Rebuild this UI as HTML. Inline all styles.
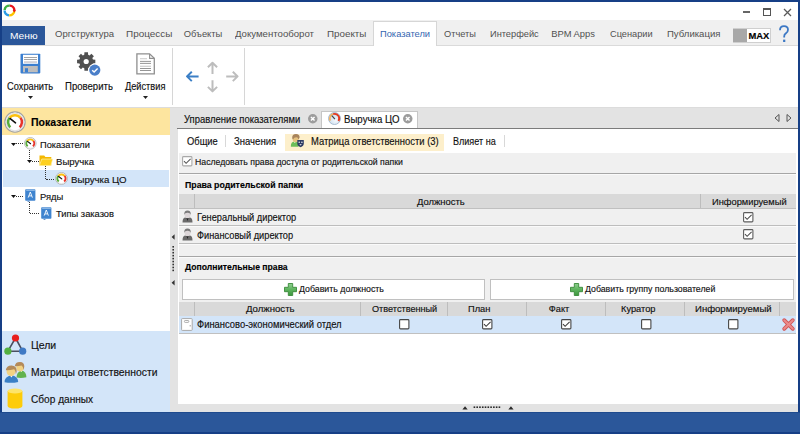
<!DOCTYPE html>
<html><head><meta charset="utf-8">
<style>
*{box-sizing:border-box;margin:0;padding:0}
html,body{width:800px;height:434px;overflow:hidden;background:#163f86}
body{position:relative;font-family:"Liberation Sans",sans-serif;font-size:9.3px;color:#222}
.a{position:absolute}
.t{position:absolute;white-space:nowrap;line-height:12px;-webkit-text-stroke:0.15px currentColor}
svg{position:absolute;overflow:visible}
.cb{position:absolute;width:10px;height:10px;border:1px solid #6e6e6e;background:#fff}
</style></head><body>

<div class="a" style="left:2px;top:2px;width:796px;height:18px;background:#fff;"></div>
<svg style="left:2.6px;top:4.3px" width="13" height="13" viewBox="0 0 13 13">
<g fill="none" stroke-width="2.4">
<path d="M1.6 6 A4.9 4.9 0 0 1 6.8 1.6" stroke="#3cb043"/>
<path d="M6.8 1.6 A4.9 4.9 0 0 1 11.4 6.2" stroke="#e8141b"/>
<path d="M11.4 6.8 A4.9 4.9 0 0 1 6.2 11.4" stroke="#fdc300"/>
<path d="M6 11.4 A4.9 4.9 0 0 1 1.6 6.6" stroke="#2a9be6"/>
</g>
<path d="M9.6 6 L13 6 L11.3 8.4Z" fill="#e8141b"/>
</svg>
<div class="a" style="left:743px;top:11px;width:7px;height:1.6px;background:#666;"></div>
<div class="a" style="left:763px;top:8px;width:8px;height:8px;border:1px solid #555;border-top-width:2px"></div>
<svg style="left:784px;top:8.5px" width="7" height="7" viewBox="0 0 7 7"><path d="M0 0L7 7M7 0L0 7" stroke="#5a5a5a" stroke-width="1.25"/></svg>
<div class="a" style="left:2px;top:20px;width:796px;height:26px;background:#f0f0f0;border-bottom:1px solid #dadada"></div>
<div class="a" style="left:2px;top:26px;width:43px;height:19px;background:#2b579a;"></div>
<div class="t" style="left:9.58px;top:30.34px;color:#fff;font-size:9.7px;transform:scaleX(1.0520);transform-origin:0 0;-webkit-text-stroke:0;">Меню</div>
<div class="t" style="left:54.5px;top:27.74px;color:#505050;font-size:9.4px;transform:scaleX(1.0172);transform-origin:0 0;-webkit-text-stroke:0;">Оргструктура</div>
<div class="t" style="left:125.58px;top:27.74px;color:#505050;font-size:9.4px;transform:scaleX(1.0595);transform-origin:0 0;-webkit-text-stroke:0;">Процессы</div>
<div class="t" style="left:183.7px;top:27.74px;color:#505050;font-size:9.4px;transform:scaleX(1.0000);transform-origin:0 0;-webkit-text-stroke:0;">Объекты</div>
<div class="t" style="left:234.5px;top:27.74px;color:#505050;font-size:9.4px;transform:scaleX(1.0260);transform-origin:0 0;-webkit-text-stroke:0;">Документооборот</div>
<div class="t" style="left:327.18px;top:27.74px;color:#505050;font-size:9.4px;transform:scaleX(1.0472);transform-origin:0 0;-webkit-text-stroke:0;">Проекты</div>
<div class="t" style="left:443.7px;top:27.74px;color:#505050;font-size:9.4px;transform:scaleX(0.9875);transform-origin:0 0;-webkit-text-stroke:0;">Отчеты</div>
<div class="t" style="left:489.61px;top:27.74px;color:#505050;font-size:9.4px;transform:scaleX(0.9854);transform-origin:0 0;-webkit-text-stroke:0;">Интерфейс</div>
<div class="t" style="left:551.2px;top:27.74px;color:#505050;font-size:9.4px;transform:scaleX(1.0000);transform-origin:0 0;-webkit-text-stroke:0;">BPM Apps</div>
<div class="t" style="left:609.5px;top:27.74px;color:#505050;font-size:9.4px;transform:scaleX(0.9837);transform-origin:0 0;-webkit-text-stroke:0;">Сценарии</div>
<div class="t" style="left:667.09px;top:27.74px;color:#505050;font-size:9.4px;transform:scaleX(1.0196);transform-origin:0 0;-webkit-text-stroke:0;">Публикация</div>
<div class="a" style="left:373px;top:21px;width:64px;height:25px;background:#fff;border:1px solid #d6d6d6;border-bottom:none"></div>
<div class="t" style="left:379.6px;top:27.74px;color:#3566b0;font-size:9.4px;transform:scaleX(0.9918);transform-origin:0 0;-webkit-text-stroke:0;">Показатели</div>
<div class="a" style="left:732.5px;top:28.2px;width:38px;height:14.5px;background:#fff;border:1px solid #cfcfcf"></div>
<div class="a" style="left:733px;top:28.7px;width:14px;height:13.5px;background:#a8a8a8;"></div>
<div class="t" style="left:748.5px;top:29.5px;color:#000;font-size:9.4px;font-weight:bold;">MAX</div>
<svg style="left:778px;top:25px" width="12" height="18" viewBox="0 0 12 18"><path d="M2 5.2 Q2 1.2 6 1.2 Q10 1.2 10 4.8 Q10 7.2 7.6 8.6 Q6.2 9.5 6.2 11.6 V12.6" stroke="#3c78c4" stroke-width="1.8" fill="none"/><rect x="5.1" y="14.6" width="2.2" height="2.4" fill="#3c78c4"/></svg>
<div class="a" style="left:2px;top:46px;width:796px;height:61px;background:#fff;"></div>
<div class="a" style="left:2px;top:107px;width:796px;height:1px;background:#dcdcdc;"></div>
<div class="a" style="left:172px;top:48px;width:1px;height:57px;background:#d6d6d6;"></div>
<div class="a" style="left:244px;top:48px;width:1px;height:57px;background:#d6d6d6;"></div>
<svg style="left:20px;top:53px" width="21" height="21" viewBox="0 0 21 21">
<rect x="0.5" y="0.8" width="19.8" height="19.6" rx="0.8" fill="#3b7fd0"/>
<rect x="3" y="1.8" width="15" height="9" fill="#fff"/>
<rect x="4" y="4" width="13" height="0.9" fill="#9a9a9a"/>
<rect x="4" y="6.1" width="13" height="0.9" fill="#9a9a9a"/>
<rect x="4" y="8.3" width="13" height="1.5" fill="#c8c8d0"/>
<rect x="3" y="13" width="14.8" height="6.3" fill="#bdbdbd"/>
<rect x="5" y="15.2" width="3" height="4.1" fill="#3b7fd0"/>
</svg>
<svg style="left:76px;top:51px" width="26" height="26" viewBox="0 0 26 26">
<polygon points="8.27,3.77 8.43,1.37 11.97,1.37 12.13,3.77 13.59,4.38 15.40,2.79 17.91,5.30 16.32,7.11 16.93,8.57 19.33,8.73 19.33,12.27 16.93,12.43 16.32,13.89 17.91,15.70 15.40,18.21 13.59,16.62 12.13,17.23 11.97,19.63 8.43,19.63 8.27,17.23 6.81,16.62 5.00,18.21 2.49,15.70 4.08,13.89 3.47,12.43 1.07,12.27 1.07,8.73 3.47,8.57 4.08,7.11 2.49,5.30 5.00,2.79 6.81,4.38" fill="#505050"/>
<circle cx="10.200000000000003" cy="10.5" r="2.6" fill="#fff"/>
<circle cx="18.8" cy="19.1" r="6.6" fill="#fff"/>
<circle cx="18.8" cy="19.1" r="5.6" fill="#4a7fc9"/>
<path d="M16.2 19.2 L18.1 21 L21.6 17.4" stroke="#fff" stroke-width="1.4" fill="none"/>
</svg>
<svg style="left:136px;top:53px" width="20" height="22" viewBox="0 0 20 22">
<path d="M0.9 0.9 H13.6 L18.3 5.4 V20.9 H0.9 Z" fill="#fff" stroke="#8f8f8f" stroke-width="1.3"/>
<path d="M13.6 0.9 V5.4 H18.3" fill="none" stroke="#8f8f8f" stroke-width="1.1"/>
<rect x="4" y="5.3" width="7" height="0.9" fill="#c4c4c4"/>
<rect x="4" y="7.9" width="11" height="0.9" fill="#8a8a8a"/>
<rect x="4" y="9.9" width="11" height="0.9" fill="#8a8a8a"/>
<rect x="4" y="12.7" width="11" height="1.1" fill="#c8c8c8"/>
<rect x="4" y="15" width="11" height="0.9" fill="#8a8a8a"/>
<rect x="4" y="17.1" width="11" height="0.9" fill="#8a8a8a"/>
</svg>
<div class="t" style="left:7.2px;top:80.97px;color:#111;font-size:10.2px;transform:scaleX(0.9100);transform-origin:0 0;">Сохранить</div>
<div class="t" style="left:64.82px;top:80.97px;color:#111;font-size:10.2px;transform:scaleX(0.9400);transform-origin:0 0;">Проверить</div>
<div class="t" style="left:125.2px;top:80.97px;color:#111;font-size:10.2px;transform:scaleX(0.9045);transform-origin:0 0;">Действия</div>
<svg style="left:27.6px;top:96.4px" width="5" height="3" viewBox="0 0 5 3"><path d="M0 0H5L2.5 3Z" fill="#222"/></svg>
<svg style="left:142.9px;top:96.2px" width="5" height="3" viewBox="0 0 5 3"><path d="M0 0H5L2.5 3Z" fill="#222"/></svg>
<svg style="left:182px;top:58px" width="60" height="38" viewBox="0 0 60 38">
<g stroke-width="2" fill="none" stroke-linejoin="round">
<path d="M4.8 18.4 H16.6 M9.8 13.7 L5 18.4 L9.8 23.1" stroke="#3b7fc6"/>
<path d="M30.5 5 V16 M25.9 9.3 L30.5 4.8 L35.1 9.3" stroke="#bdbdbd"/>
<path d="M30.5 22.3 V33.3 M25.9 28.9 L30.5 33.4 L35.1 28.9" stroke="#bdbdbd"/>
<path d="M44.2 18.4 H55.6 M50.8 13.7 L55.6 18.4 L50.8 23.1" stroke="#bdbdbd"/>
</g></svg>
<div class="a" style="left:2px;top:108px;width:167.5px;height:27px;background:#fde59f;"></div>
<div class="a" style="left:2px;top:135px;width:167.5px;height:196px;background:#fff;"></div>
<div class="a" style="left:2px;top:331px;width:167.5px;height:81px;background:#d3e5f9;"></div>
<svg style="left:4px;top:110.8px" width="22" height="22" viewBox="0 0 22 22">
<circle cx="11" cy="11" r="10.1" fill="#fff" stroke="#a3a3a3" stroke-width="1.3"/>
<circle cx="11" cy="11" r="8.8" fill="none" stroke="#e2e2e2" stroke-width="1.3"/>
<path d="M6.4 16.2 A6.8 6.8 0 0 1 5.6 6.8" stroke="#58ad3a" stroke-width="2.5" fill="none"/>
<path d="M5.6 6.8 A6.8 6.8 0 0 1 16.4 6.8" stroke="#fcc010" stroke-width="2.5" fill="none"/>
<path d="M16.4 6.8 A6.8 6.8 0 0 1 15.6 16.2" stroke="#e8332a" stroke-width="2.5" fill="none"/>
<path d="M11.5 11.8 L6.2 7.6" stroke="#111" stroke-width="1.6" stroke-linecap="round"/>
</svg>
<div class="t" style="left:31.0px;top:115.5px;color:#000;font-size:10.6px;font-weight:bold;transform:scaleX(0.9898);transform-origin:0 0;">Показатели</div>
<div class="a" style="left:3.3px;top:170px;width:166.2px;height:17px;background:#d3e5f9;"></div>
<svg style="left:10.8px;top:143px" width="5" height="3" viewBox="0 0 5 3"><path d="M0 0H5L2.5 3Z" fill="#111"/></svg>
<div class="a" style="left:16px;top:143px;width:7px;height:1px;border-top:1px dotted #333"></div>
<svg style="left:23.8px;top:137.2px" width="12.6" height="12.6" viewBox="0 0 22 22">
<circle cx="11" cy="11" r="10.1" fill="#fff" stroke="#a3a3a3" stroke-width="1.3"/>
<circle cx="11" cy="11" r="8.8" fill="none" stroke="#e2e2e2" stroke-width="1.3"/>
<path d="M6.4 16.2 A6.8 6.8 0 0 1 5.6 6.8" stroke="#58ad3a" stroke-width="3.4" fill="none"/>
<path d="M5.6 6.8 A6.8 6.8 0 0 1 16.4 6.8" stroke="#fcc010" stroke-width="3.4" fill="none"/>
<path d="M16.4 6.8 A6.8 6.8 0 0 1 15.6 16.2" stroke="#e8332a" stroke-width="3.4" fill="none"/>
<path d="M11.5 11.8 L6.2 7.6" stroke="#111" stroke-width="2.0" stroke-linecap="round"/>
</svg>
<div class="t" style="left:39.72px;top:139.14px;color:#111;font-size:9.7px;transform:scaleX(0.9549);transform-origin:0 0;">Показатели</div>
<div class="a" style="left:29px;top:150px;width:1px;height:11px;border-left:1px dotted #333"></div>
<svg style="left:27px;top:160px" width="5" height="3" viewBox="0 0 5 3"><path d="M0 0H5L2.5 3Z" fill="#111"/></svg>
<div class="a" style="left:32px;top:161px;width:6.5px;height:1px;border-top:1px dotted #333"></div>
<svg style="left:39px;top:155px" width="14" height="11" viewBox="0 0 14 11">
<path d="M0.5 0.6 H5.2 L6.4 2 H12.3 V10.5 H0.5 Z" fill="#f4b800"/>
<path d="M2.8 4 H13.8 L11.8 10.6 H0.4 Z" fill="#fdd020" stroke="#fff6c8" stroke-width="0.6"/>
</svg>
<div class="t" style="left:55.8px;top:156.14px;color:#111;font-size:9.7px;transform:scaleX(0.9892);transform-origin:0 0;">Выручка</div>
<div class="a" style="left:45px;top:166px;width:1px;height:13px;border-left:1px dotted #333"></div>
<div class="a" style="left:46px;top:178.5px;width:7.5px;height:1px;border-top:1px dotted #333"></div>
<svg style="left:55px;top:172.4px" width="12.9" height="12.9" viewBox="0 0 22 22">
<circle cx="11" cy="11" r="10.1" fill="#fff" stroke="#a3a3a3" stroke-width="1.3"/>
<circle cx="11" cy="11" r="8.8" fill="none" stroke="#e2e2e2" stroke-width="1.3"/>
<path d="M6.4 16.2 A6.8 6.8 0 0 1 5.6 6.8" stroke="#58ad3a" stroke-width="3.4" fill="none"/>
<path d="M5.6 6.8 A6.8 6.8 0 0 1 16.4 6.8" stroke="#fcc010" stroke-width="3.4" fill="none"/>
<path d="M16.4 6.8 A6.8 6.8 0 0 1 15.6 16.2" stroke="#e8332a" stroke-width="3.4" fill="none"/>
<path d="M11.5 11.8 L6.2 7.6" stroke="#111" stroke-width="2.0" stroke-linecap="round"/>
</svg>
<div class="t" style="left:71.1px;top:174.14px;color:#111;font-size:9.7px;transform:scaleX(0.9981);transform-origin:0 0;">Выручка ЦО</div>
<svg style="left:11px;top:194.8px" width="5" height="3" viewBox="0 0 5 3"><path d="M0 0H5L2.5 3Z" fill="#111"/></svg>
<div class="a" style="left:16px;top:196px;width:7px;height:1px;border-top:1px dotted #333"></div>
<svg style="left:24.9px;top:189.2px" width="11" height="13" viewBox="0 0 11 13">
<rect x="0.2" y="0.2" width="10.2" height="11.5" rx="0.8" fill="#3f84cf"/>
<rect x="1.2" y="0.8" width="8.6" height="0.9" fill="#a9cbee"/>
<path d="M2.7 12 H4.3 V13 L3.5 12.4 L2.7 13Z" fill="#1e5ca8"/>
<path d="M3.2 8.6 L5.3 3 L7.4 8.6 M4 6.9 H6.6" stroke="#fff" stroke-width="0.9" fill="none"/>
</svg>
<div class="t" style="left:39.61px;top:191.14px;color:#111;font-size:9.7px;transform:scaleX(0.9652);transform-origin:0 0;">Ряды</div>
<div class="a" style="left:29px;top:202px;width:1px;height:11px;border-left:1px dotted #333"></div>
<div class="a" style="left:30px;top:213px;width:9px;height:1px;border-top:1px dotted #333"></div>
<svg style="left:40.8px;top:206.5px" width="11" height="13" viewBox="0 0 11 13">
<rect x="0.2" y="0.2" width="10.2" height="11.5" rx="0.8" fill="#3f84cf"/>
<rect x="1.2" y="0.8" width="8.6" height="0.9" fill="#a9cbee"/>
<path d="M2.7 12 H4.3 V13 L3.5 12.4 L2.7 13Z" fill="#1e5ca8"/>
<path d="M3.2 8.6 L5.3 3 L7.4 8.6 M4 6.9 H6.6" stroke="#fff" stroke-width="0.9" fill="none"/>
</svg>
<div class="t" style="left:55.6px;top:208.14px;color:#111;font-size:9.7px;transform:scaleX(0.9633);transform-origin:0 0;">Типы заказов</div>
<svg style="left:3px;top:333px" width="25" height="23" viewBox="0 0 25 23">
<path d="M12.5 5 L4.9 18.2 H19.7 Z" stroke="#4a4f60" stroke-width="1.6" fill="none"/>
<circle cx="12.5" cy="5" r="3.6" fill="#e8201f"/>
<circle cx="4.9" cy="18.2" r="3.6" fill="#54b041"/>
<circle cx="19.7" cy="18.2" r="3.6" fill="#3f79c4"/>
</svg>
<div class="t" style="left:31.0px;top:340.2px;color:#111;font-size:10.4px;transform:scaleX(1.0083);transform-origin:0 0;">Цели</div>
<svg style="left:2px;top:358px" width="28" height="28" viewBox="0 0 28 28">
<path d="M14.6 19.6 Q14.4 13.8 19.6 12.4 Q24.4 13.6 24.4 19.2 Q19.5 20.6 14.6 19.6Z" fill="#62b24e"/>
<path d="M18.2 12.6 L19.4 14 L20.6 12.6Z" fill="#fff"/>
<ellipse cx="18" cy="9.4" rx="3.7" ry="4.1" fill="#f2d283"/>
<path d="M12.8 8.2 Q13.2 3.8 18 3.9 Q22.4 4 22.3 8.6 L21.6 12 Q21 8.2 19.6 7.6 Q16 8.4 12.8 8.2Z" fill="#b48a5a"/>
<path d="M2.6 24.2 Q2.4 18.6 9.3 17.2 Q16.2 18.4 16.2 24 Q9.3 25.6 2.6 24.2Z" fill="#3a7fc6"/>
<path d="M8 17.6 L9.4 19.4 L10.8 17.6Z" fill="#fff"/>
<ellipse cx="9" cy="13.6" rx="4.4" ry="4.6" fill="#f2d283"/>
<path d="M3.8 12.2 Q4.4 7.4 9.6 7.5 Q14.8 7.8 14.7 13.4 L13.9 16.2 Q13.3 12 12 11.3 Q8 12.4 3.8 12.2Z" fill="#b48a5a"/>
</svg>
<div class="t" style="left:31.0px;top:366.8px;color:#111;font-size:10.4px;transform:scaleX(0.9968);transform-origin:0 0;">Матрицы ответственности</div>
<svg style="left:7px;top:388px" width="16" height="21" viewBox="0 0 16 21">
<path d="M0.6 3 V17.8 Q0.6 20.6 8 20.6 Q15.4 20.6 15.4 17.8 V3Z" fill="#fdcc0a"/>
<ellipse cx="8" cy="3" rx="7.4" ry="2.5" fill="#fde46a"/>
</svg>
<div class="t" style="left:31.4px;top:394.2px;color:#111;font-size:10.4px;transform:scaleX(0.9734);transform-origin:0 0;">Сбор данных</div>
<div class="a" style="left:169.5px;top:108px;width:628.5px;height:304px;background:#e3e3e3;"></div>
<svg style="left:171px;top:234px" width="4" height="52" viewBox="0 0 4 52"><g fill="#333"><path d="M3.6 0.2 V5.8 L0.6 3Z M3.6 46 V51.6 L0.6 48.8Z"/><rect x="1.4" y="12.00" width="1.6" height="1.6"/><rect x="1.4" y="14.95" width="1.6" height="1.6"/><rect x="1.4" y="17.90" width="1.6" height="1.6"/><rect x="1.4" y="20.85" width="1.6" height="1.6"/><rect x="1.4" y="23.80" width="1.6" height="1.6"/><rect x="1.4" y="26.75" width="1.6" height="1.6"/><rect x="1.4" y="29.70" width="1.6" height="1.6"/><rect x="1.4" y="32.65" width="1.6" height="1.6"/><rect x="1.4" y="35.60" width="1.6" height="1.6"/></g></svg>
<div class="t" style="left:183.6px;top:113.6px;color:#111;font-size:10.1px;transform:scaleX(0.9382);transform-origin:0 0;">Управление показателями</div>
<svg style="left:307.5px;top:113.8px" width="9.5" height="9.5" viewBox="0 0 9 9"><circle cx="4.5" cy="4.5" r="4.5" fill="#9c9c9c"/><path d="M2.8 2.8L6.2 6.2M6.2 2.8L2.8 6.2" stroke="#fff" stroke-width="1.4"/></svg>
<div class="a" style="left:321px;top:110.6px;width:96.5px;height:18.9px;background:#fff;border:1px solid #c6c6c6;border-bottom:none"></div>
<svg style="left:327.8px;top:111.8px" width="13" height="13" viewBox="0 0 13 13">
<defs><radialGradient id="gg" cx="0.6" cy="0.65" r="0.6"><stop offset="0" stop-color="#f4f8fc"/><stop offset="1" stop-color="#c9dcee"/></radialGradient></defs>
<circle cx="6.5" cy="6.5" r="6" fill="url(#gg)" stroke="#9fb4cc" stroke-width="0.9"/>
<path d="M2.3 8.6 A4.6 4.6 0 0 1 5.2 2.1" stroke="#f6b35a" stroke-width="1.6" fill="none"/>
<path d="M5.2 2.1 A4.6 4.6 0 0 1 10.4 9.1" stroke="#e5381f" stroke-width="1.8" fill="none"/>
<path d="M6.9 7.1 L3.8 3.6" stroke="#444" stroke-width="1.2"/>
</svg>
<div class="t" style="left:343.62px;top:113.6px;color:#111;font-size:10.1px;transform:scaleX(0.9561);transform-origin:0 0;">Выручка ЦО</div>
<svg style="left:403px;top:113.8px" width="9.5" height="9.5" viewBox="0 0 9 9"><circle cx="4.5" cy="4.5" r="4.5" fill="#9c9c9c"/><path d="M2.8 2.8L6.2 6.2M6.2 2.8L2.8 6.2" stroke="#fff" stroke-width="1.4"/></svg>
<svg style="left:774px;top:114px" width="18" height="8" viewBox="0 0 18 8"><path d="M5 0.5 V7.5 L1 4Z" fill="none" stroke="#555" stroke-width="1"/><path d="M13 0.5 V7.5 L17 4Z" fill="none" stroke="#555" stroke-width="1"/></svg>
<div class="a" style="left:177px;top:128px;width:620.5px;height:1px;background:#7c7c7c;"></div>
<div class="a" style="left:178px;top:129px;width:619.5px;height:274.7px;background:#fff;"></div>
<div class="a" style="left:285.3px;top:133.6px;width:159px;height:17.3px;background:#fdefcb;"></div>
<div class="t" style="left:186.6px;top:135.5px;color:#111;font-size:10.4px;transform:scaleX(0.9000);transform-origin:0 0;">Общие</div>
<div class="a" style="left:225px;top:135px;width:1px;height:12px;background:#d8d8d8;"></div>
<div class="t" style="left:234.1px;top:135.5px;color:#111;font-size:10.4px;transform:scaleX(0.9178);transform-origin:0 0;">Значения</div>
<div class="t" style="left:311.14px;top:135.5px;color:#111;font-size:10.4px;transform:scaleX(0.9065);transform-origin:0 0;">Матрица ответственности (3)</div>
<div class="t" style="left:453.15px;top:135.5px;color:#111;font-size:10.4px;transform:scaleX(0.8708);transform-origin:0 0;">Влияет на</div>
<div class="a" style="left:504px;top:135px;width:1px;height:12px;background:#d8d8d8;"></div>
<svg style="left:289px;top:133px" width="16" height="16" viewBox="0 0 16 16">
<path d="M1.8 13.8 Q1.8 9 5 8.6 H7.5 Q9.5 9 9.5 11 V13.8Z" fill="#6cbd58"/>
<path d="M4.6 8.6 L5.8 10 L7 8.6Z" fill="#fff"/>
<ellipse cx="6.6" cy="6" rx="3" ry="3.2" fill="#e6c27e"/>
<path d="M3.2 5.2 Q3 1 7 1 Q10.8 1.2 10.6 4.6 Q10 6 9.4 6.6 Q9.2 4 7.2 4.2 Q5 4.2 4 6.6Z" fill="#a9845c"/>
<path d="M8.3 7 H14.8 V10.6 Q14.8 13.4 11.55 14.2 Q8.3 13.4 8.3 10.6Z" fill="#2d3b63"/>
<circle cx="10.2" cy="9.2" r="0.7" fill="#fff"/><circle cx="12.9" cy="9.2" r="0.7" fill="#fff"/>
<path d="M10.3 11.3 H12.8 L11.55 12.5Z" fill="#fff"/>
</svg>
<div class="a" style="left:179px;top:152.5px;width:616.7px;height:251px;background:#f0f0f0;"></div>
<svg style="left:182px;top:156.3px" width="10.5" height="10.5" viewBox="0 0 10.5 10.5">
<rect x="0.6" y="0.6" width="9.3" height="9.3" rx="0.9" fill="#fff" stroke="#a8a8a8" stroke-width="1.1"/>
<path d="M2 5.2 L4.1 7.3 L8.6 2.9" stroke="#555" stroke-width="1.05" fill="none"/>
</svg>
<div class="t" style="left:194.64px;top:156.2px;color:#111;font-size:9.8px;transform:scaleX(0.8884);transform-origin:0 0;">Наследовать права доступа от родительской папки</div>
<div class="a" style="left:179px;top:173px;width:616.7px;height:1px;background:#a6a6a6;"></div>
<div class="a" style="left:179px;top:174px;width:616.7px;height:1px;background:#fafafa;"></div>
<div class="t" style="left:184.5px;top:178.6px;color:#000;font-size:9.8px;font-weight:bold;transform:scaleX(0.8939);transform-origin:0 0;">Права родительской папки</div>
<div class="a" style="left:179px;top:194px;width:616.7px;height:14px;background:#d9d9d9;"></div>
<div class="a" style="left:193.5px;top:194px;width:1px;height:14px;background:#bdbdbd;"></div>
<div class="a" style="left:700px;top:194px;width:1px;height:14px;background:#bdbdbd;"></div>
<div class="t" style="left:416.8px;top:195.91px;color:#111;font-size:9.2px;transform:scaleX(1.0261);transform-origin:0 0;">Должность</div>
<div class="t" style="left:711.79px;top:195.91px;color:#111;font-size:9.2px;transform:scaleX(1.0139);transform-origin:0 0;">Информируемый</div>
<div class="a" style="left:179px;top:207.6px;width:616.7px;height:1px;background:#c0c0c0;"></div>
<div class="a" style="left:179px;top:224.8px;width:616.7px;height:1px;background:#bdbdbd;"></div>
<div class="a" style="left:179px;top:225.8px;width:616.7px;height:1px;background:#fafafa;"></div>
<div class="a" style="left:179px;top:242.6px;width:616.7px;height:1px;background:#bdbdbd;"></div>
<div class="a" style="left:179px;top:243.6px;width:616.7px;height:1px;background:#fafafa;"></div>
<div class="a" style="left:179px;top:255.9px;width:616.7px;height:1px;background:#a6a6a6;"></div>
<div class="a" style="left:179px;top:256.9px;width:616.7px;height:1px;background:#fafafa;"></div>
<svg style="left:182px;top:210px" width="11" height="13" viewBox="0 0 11 13">
<path d="M0.5 12.5 Q0.5 8.3 3 7.6 H8 Q10.5 8.3 10.5 12.5Z" fill="#6a6a6a"/>
<path d="M4.3 7.6 L5.5 11 L6.7 7.6Z" fill="#222"/>
<ellipse cx="5.5" cy="4.6" rx="3" ry="3.6" fill="#dcd6d8"/>
<path d="M2.3 4.8 Q2 0.6 5.5 0.6 Q9 0.6 8.7 4.8 Q8 2.6 5.5 2.8 Q3 2.6 2.3 4.8Z" fill="#7a7a7a"/>
</svg>
<div class="t" style="left:197.33px;top:211.7px;color:#111;font-size:10.1px;transform:scaleX(0.9168);transform-origin:0 0;">Генеральный директор</div>
<svg style="left:743.2px;top:211.6px" width="10.5" height="10.5" viewBox="0 0 10.5 10.5">
<rect x="0.6" y="0.6" width="9.3" height="9.3" rx="0.9" fill="#fff" stroke="#5c5c5c" stroke-width="1.1"/>
<path d="M2 5.2 L4.1 7.3 L8.6 2.9" stroke="#4a4a4a" stroke-width="1.05" fill="none"/>
</svg>
<svg style="left:182px;top:227.5px" width="11" height="13" viewBox="0 0 11 13">
<path d="M0.5 12.5 Q0.5 8.3 3 7.6 H8 Q10.5 8.3 10.5 12.5Z" fill="#6a6a6a"/>
<path d="M4.3 7.6 L5.5 11 L6.7 7.6Z" fill="#222"/>
<ellipse cx="5.5" cy="4.6" rx="3" ry="3.6" fill="#dcd6d8"/>
<path d="M2.3 4.8 Q2 0.6 5.5 0.6 Q9 0.6 8.7 4.8 Q8 2.6 5.5 2.8 Q3 2.6 2.3 4.8Z" fill="#7a7a7a"/>
</svg>
<div class="t" style="left:196.53px;top:229.6px;color:#111;font-size:10.1px;transform:scaleX(0.9163);transform-origin:0 0;">Финансовый директор</div>
<svg style="left:743.2px;top:229.2px" width="10.5" height="10.5" viewBox="0 0 10.5 10.5">
<rect x="0.6" y="0.6" width="9.3" height="9.3" rx="0.9" fill="#fff" stroke="#5c5c5c" stroke-width="1.1"/>
<path d="M2 5.2 L4.1 7.3 L8.6 2.9" stroke="#4a4a4a" stroke-width="1.05" fill="none"/>
</svg>
<div class="t" style="left:184.7px;top:261.47px;color:#000;font-size:9.6px;font-weight:bold;transform:scaleX(0.8991);transform-origin:0 0;">Дополнительные права</div>
<div class="a" style="left:181.5px;top:279px;width:303px;height:20.5px;background:#fff;border:1px solid #c0c0c0"></div>
<div class="a" style="left:489.5px;top:279px;width:304.5px;height:20.5px;background:#fff;border:1px solid #c0c0c0"></div>
<svg style="left:284.1px;top:282.9px" width="13" height="13" viewBox="0 0 13 13">
<defs><linearGradient id="pg284" x1="0" y1="0" x2="0" y2="1"><stop offset="0" stop-color="#8fd08f"/><stop offset="0.5" stop-color="#5fb45f"/><stop offset="1" stop-color="#3c963c"/></linearGradient></defs>
<path d="M4.3 0.5 H8.7 V4.3 H12.5 V8.7 H8.7 V12.5 H4.3 V8.7 H0.5 V4.3 H4.3Z" fill="url(#pg284)" stroke="#3a8a3a" stroke-width="0.9" stroke-linejoin="round"/>
</svg>
<div class="t" style="left:298.9px;top:283.11px;color:#111;font-size:9.5px;transform:scaleX(0.9261);transform-origin:0 0;">Добавить должность</div>
<svg style="left:570px;top:282.9px" width="13" height="13" viewBox="0 0 13 13">
<defs><linearGradient id="pg570" x1="0" y1="0" x2="0" y2="1"><stop offset="0" stop-color="#8fd08f"/><stop offset="0.5" stop-color="#5fb45f"/><stop offset="1" stop-color="#3c963c"/></linearGradient></defs>
<path d="M4.3 0.5 H8.7 V4.3 H12.5 V8.7 H8.7 V12.5 H4.3 V8.7 H0.5 V4.3 H4.3Z" fill="url(#pg570)" stroke="#3a8a3a" stroke-width="0.9" stroke-linejoin="round"/>
</svg>
<div class="t" style="left:585.0px;top:283.11px;color:#111;font-size:9.5px;transform:scaleX(0.9220);transform-origin:0 0;">Добавить группу пользователей</div>
<div class="a" style="left:179px;top:302px;width:616.7px;height:13.5px;background:#d9d9d9;"></div>
<div class="a" style="left:193.7px;top:302px;width:1px;height:13.5px;background:#bdbdbd;"></div>
<div class="a" style="left:359.5px;top:302px;width:1px;height:13.5px;background:#bdbdbd;"></div>
<div class="a" style="left:447px;top:302px;width:1px;height:13.5px;background:#bdbdbd;"></div>
<div class="a" style="left:525.75px;top:302px;width:1px;height:13.5px;background:#bdbdbd;"></div>
<div class="a" style="left:604.5px;top:302px;width:1px;height:13.5px;background:#bdbdbd;"></div>
<div class="a" style="left:683.5px;top:302px;width:1px;height:13.5px;background:#bdbdbd;"></div>
<div class="a" style="left:778.5px;top:302px;width:1px;height:13.5px;background:#bdbdbd;"></div>
<div class="t" style="left:245.9px;top:303.41px;color:#111;font-size:9.2px;transform:scaleX(1.0435);transform-origin:0 0;">Должность</div>
<div class="t" style="left:371.8px;top:303.41px;color:#111;font-size:9.2px;transform:scaleX(0.9938);transform-origin:0 0;">Ответственный</div>
<div class="t" style="left:468.4px;top:303.41px;color:#111;font-size:9.2px;transform:scaleX(1.0119);transform-origin:0 0;">План</div>
<div class="t" style="left:548.8px;top:303.41px;color:#111;font-size:9.2px;transform:scaleX(1.0000);transform-origin:0 0;">Факт</div>
<div class="t" style="left:620.85px;top:303.41px;color:#111;font-size:9.2px;transform:scaleX(1.0076);transform-origin:0 0;">Куратор</div>
<div class="t" style="left:694.58px;top:303.41px;color:#111;font-size:9.2px;transform:scaleX(1.0417);transform-origin:0 0;">Информируемый</div>
<div class="a" style="left:179px;top:315.5px;width:616.7px;height:17.5px;background:#d3e5f9;"></div>
<div class="a" style="left:179px;top:333px;width:616.7px;height:1px;background:#c0c0c0;"></div>
<div class="a" style="left:179px;top:334px;width:616.7px;height:69.7px;background:#fff;"></div>
<svg style="left:181px;top:317.6px" width="12" height="13" viewBox="0 0 12 13">
<rect x="0.6" y="0.6" width="10.6" height="11.8" rx="0.7" fill="#fff" stroke="#a8a8a8" stroke-width="1"/>
<rect x="3.4" y="2.5" width="4.4" height="1.9" rx="0.8" fill="#fff" stroke="#9a9a9a" stroke-width="0.8"/>
<rect x="8.6" y="7.4" width="1.3" height="0.9" fill="#888"/>
</svg>
<div class="t" style="left:196.73px;top:319.3px;color:#111;font-size:10.1px;transform:scaleX(0.9312);transform-origin:0 0;">Финансово-экономический отдел</div>
<svg style="left:399.3px;top:319.1px" width="10.5" height="10.5" viewBox="0 0 10.5 10.5">
<rect x="0.6" y="0.6" width="9.3" height="9.3" rx="0.9" fill="#fff" stroke="#454545" stroke-width="1.1"/>

</svg>
<svg style="left:481.90000000000003px;top:319.1px" width="10.5" height="10.5" viewBox="0 0 10.5 10.5">
<rect x="0.6" y="0.6" width="9.3" height="9.3" rx="0.9" fill="#fff" stroke="#454545" stroke-width="1.1"/>
<path d="M2 5.2 L4.1 7.3 L8.6 2.9" stroke="#3a3a3a" stroke-width="1.05" fill="none"/>
</svg>
<svg style="left:561.4px;top:319.1px" width="10.5" height="10.5" viewBox="0 0 10.5 10.5">
<rect x="0.6" y="0.6" width="9.3" height="9.3" rx="0.9" fill="#fff" stroke="#454545" stroke-width="1.1"/>
<path d="M2 5.2 L4.1 7.3 L8.6 2.9" stroke="#3a3a3a" stroke-width="1.05" fill="none"/>
</svg>
<svg style="left:640.6px;top:319.1px" width="10.5" height="10.5" viewBox="0 0 10.5 10.5">
<rect x="0.6" y="0.6" width="9.3" height="9.3" rx="0.9" fill="#fff" stroke="#454545" stroke-width="1.1"/>

</svg>
<svg style="left:727.6px;top:319.1px" width="10.5" height="10.5" viewBox="0 0 10.5 10.5">
<rect x="0.6" y="0.6" width="9.3" height="9.3" rx="0.9" fill="#fff" stroke="#454545" stroke-width="1.1"/>

</svg>
<svg style="left:781.5px;top:317.5px" width="13" height="13" viewBox="0 0 13 13">
<path d="M2.2 2.2 L10.8 10.8 M10.8 2.2 L2.2 10.8" stroke="#d05555" stroke-width="3.8" stroke-linecap="round"/>
<path d="M2.2 2.2 L10.8 10.8 M10.8 2.2 L2.2 10.8" stroke="#eb8a8a" stroke-width="2" stroke-linecap="round"/>
</svg>
<svg style="left:461.5px;top:403px" width="52" height="8" viewBox="0 0 52 8"><g fill="#2a2a2a"><path d="M0.4 6.6 H5.7 L3.05 3.2Z M46.3 6.6 H51.6 L48.95 3.2Z"/><rect x="11.60" y="3.4" width="1.6" height="1.6"/><rect x="14.38" y="3.4" width="1.6" height="1.6"/><rect x="17.16" y="3.4" width="1.6" height="1.6"/><rect x="19.94" y="3.4" width="1.6" height="1.6"/><rect x="22.72" y="3.4" width="1.6" height="1.6"/><rect x="25.50" y="3.4" width="1.6" height="1.6"/><rect x="28.28" y="3.4" width="1.6" height="1.6"/><rect x="31.06" y="3.4" width="1.6" height="1.6"/><rect x="33.84" y="3.4" width="1.6" height="1.6"/><rect x="36.62" y="3.4" width="1.6" height="1.6"/></g></svg>
<div class="a" style="left:0px;top:411.5px;width:800px;height:20.5px;background:#2b579a;"></div>
<div class="a" style="left:0px;top:411.5px;width:800px;height:1.2px;background:#1f4b8e;"></div>
</body></html>
